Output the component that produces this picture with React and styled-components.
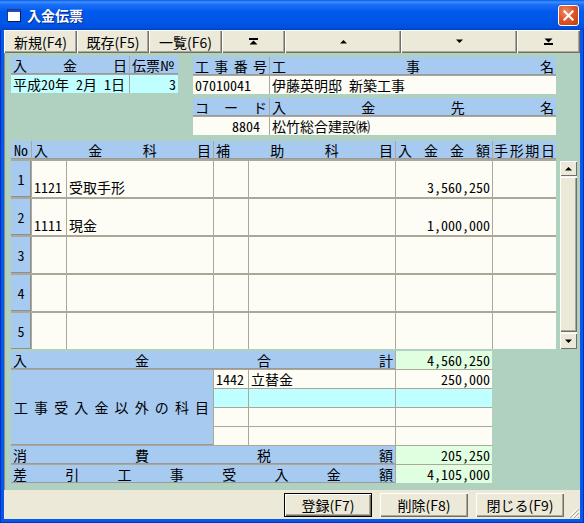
import React from "react";
import styled, { createGlobalStyle } from "styled-components";

const GlobalStyle = createGlobalStyle`
  html, body {
    margin: 0;
    padding: 0;
  }
  body {
    font-family: "Noto Sans CJK JP", "Noto Sans", sans-serif;
    font-size: 14px;
    color: #000;
    font-feature-settings: "hwid" 1;
  }
`;

const Window = styled.div`
  width: 584px;
  height: 523px;
  display: flex;
  flex-direction: column;
  background: #0055e5;
  overflow: hidden;
`;

const TitleBar = styled.div`
  height: 30px;
  flex: none;
  display: flex;
  align-items: center;
  padding: 0 5px 0 7px;
  box-sizing: border-box;
  background: linear-gradient(
    to bottom,
    #0a5ae8 0%,
    #3d90fd 7%,
    #1b6ff5 15%,
    #0059ee 40%,
    #0056e6 75%,
    #0050dc 92%,
    #0040c8 100%
  );
  color: #fff;
`;

const Title = styled.span`
  flex: 1;
  margin-left: 6px;
  font-weight: bold;
  font-size: 14px;
  line-height: 30px;
  text-shadow: 1px 1px 0 #0a2a90;
`;

const CloseButton = styled.div`
  width: 21px;
  height: 21px;
  box-sizing: border-box;
  border: 1px solid #fff;
  border-radius: 3px;
  background: radial-gradient(circle at 35% 30%, #f08a64 0%, #e2562a 45%, #c33a10 100%);
  display: flex;
  align-items: center;
  justify-content: center;
`;

const Frame = styled.div`
  flex: 1;
  display: flex;
  padding: 0 4px 4px;
  background: #0858e8;
  box-shadow: inset 1px 0 0 #0030c8, inset -1px 0 0 #0030c8, inset 0 -1px 0 #0030c8;
`;

const Client = styled.div`
  flex: 1;
  display: flex;
  flex-direction: column;
  background: #ece9d8;
`;

const Toolbar = styled.div`
  display: flex;
  height: 23px;
  flex: none;
`;

const RaisedButton = styled.button`
  width: ${(p) => p.$w}px;
  height: ${(p) => p.$h || 23}px;
  flex: none;
  padding: 0;
  margin: 0;
  border: none;
  background: #ece9d8;
  font-family: inherit;
  font-size: 14px;
  color: #000;
  display: flex;
  align-items: center;
  justify-content: center;
  box-shadow: inset 1px 1px 0 #fff, inset -1px -1px 0 #716f64, inset -2px -2px 0 #aca899;
  ${(p) =>
    p.$default &&
    `
    outline: 1px solid #000;
    outline-offset: -1px;
    box-shadow: inset 2px 2px 0 #fff, inset -2px -2px 0 #716f64, inset -3px -3px 0 #aca899;
  `}
`;

const Body = styled.div`
  flex: 1;
  display: flex;
  flex-direction: column;
  align-items: flex-start;
  background: #b0d0c0;
  border-left: 1px solid #8a8a80;
  padding: 3px 0 0 6px;
`;

const Top = styled.div`
  display: flex;
  align-items: flex-start;
  gap: 15px;
`;

const FormGrid = styled.div`
  display: grid;
  grid-template-columns: ${(p) => p.$cols};
  grid-auto-rows: 18px;
  gap: 1px;
  background: #a8a8a0;
  margin-top: ${(p) => p.$top || 0}px;
`;

const RightStack = styled.div`
  display: flex;
  flex-direction: column;
  gap: 4px;
  margin-top: 1px;
`;

const Head = styled.div`
  background: #a6caf0;
  box-shadow: inset 0 -1px 0 #9a9a9a;
  display: flex;
  align-items: center;
  justify-content: ${(p) => (p.$spread ? "space-between" : p.$center ? "center" : "flex-start")};
  padding: ${(p) => (p.$pad != null ? p.$pad : "0 2px")};
  line-height: 17px;
  white-space: nowrap;
  overflow: hidden;
  grid-column: ${(p) => p.$col || "auto"};
  grid-row: ${(p) => p.$row || "auto"};
`;

const Cell = styled.div`
  background: ${(p) => p.$bg || "#fdfdf6"};
  display: flex;
  align-items: ${(p) => (p.$bottom ? "flex-end" : "center")};
  justify-content: ${(p) => (p.$right ? "flex-end" : "flex-start")};
  padding: ${(p) => (p.$bottom ? "0 2px 1px" : "0 2px")};
  line-height: 17px;
  white-space: pre;
  overflow: hidden;
  grid-column: ${(p) => p.$col || "auto"};
`;

const RowNo = styled.div`
  background: #a6caf0;
  box-shadow: inset -1px -1px 0 #8e8e8e;
  display: flex;
  align-items: center;
  justify-content: center;
  line-height: 17px;
`;

const Middle = styled.div`
  display: flex;
  align-items: flex-start;
  gap: 4px;
  margin-top: 6px;
`;

const MainGrid = styled.div`
  display: grid;
  grid-template-columns: 20px 34px 146px 34px 146px 96px 63px;
  grid-template-rows: 18px repeat(5, 36px);
  column-gap: 1px;
  row-gap: 2px;
  background: #aca899;
`;

const Scrollbar = styled.div`
  width: 17px;
  height: 188px;
  margin-top: 20px;
  display: flex;
  flex-direction: column;
  gap: 1px;
  background: #f4f3ee;
`;

const ScrollButton = styled.div`
  height: ${(p) => p.$h}px;
  flex: none;
  background: #ece9d8;
  box-shadow: inset 1px 1px 0 #fff, inset -1px -1px 0 #716f64;
  display: flex;
  align-items: center;
  justify-content: center;
`;

const ScrollThumb = styled.div`
  flex: 1;
  background: #ece9d8;
  box-shadow: inset 1px 1px 0 #fff, inset -1px -1px 0 #716f64, inset -2px -2px 0 #aca899;
`;

const LowerGrid = styled.div`
  display: grid;
  grid-template-columns: 20px 34px 146px 34px 146px 96px;
  grid-template-rows: repeat(7, 18px);
  gap: 1px;
  background: #aca899;
  margin-top: 2px;
`;

const Footer = styled.div`
  position: relative;
  height: 29px;
  flex: none;
  display: flex;
  justify-content: flex-end;
  gap: 8px;
  padding: 3px 16px 0 0;
  box-sizing: border-box;
`;

const Grip = styled.svg`
  position: absolute;
  right: 1px;
  bottom: 1px;
`;

const Spread = ({ text }) =>
  text.split("").map((c, i) => <span key={i}>{c}</span>);

const TopIcon = ({ flip }) => (
  <svg width="9" height="7" viewBox="0 0 9 7" style={flip ? { transform: "scaleY(-1)" } : null}>
    <rect x="0" y="0" width="9" height="2" fill="#000" />
    <polygon points="0.5,6.5 4.5,2.5 8.5,6.5" fill="#000" />
  </svg>
);

const Arrow = ({ down, size = 7 }) => (
  <svg width={size} height={Math.ceil(size / 2) + 1} viewBox="0 0 7 4">
    <polygon points={down ? "0,0 7,0 3.5,3.5" : "0,4 7,4 3.5,0.5"} fill="#000" />
  </svg>
);

const rows = [
  { no: "1", code: "1121", name: "受取手形", amount: "3,560,250" },
  { no: "2", code: "1111", name: "現金", amount: "1,000,000" },
  { no: "3" },
  { no: "4" },
  { no: "5" },
];

const others = [
  { code: "1442", name: "立替金", amount: "250,000", bg: "#fdfdf6" },
  { bg: "#c0ffff" },
  { bg: "#fdfdf6" },
  { bg: "#fdfdf6" },
];

export default function App() {
  return (
    <Window>
      <GlobalStyle />
      <TitleBar>
        <svg width="14" height="13" viewBox="0 0 14 13">
          <rect x="0.5" y="0.5" width="13" height="12" fill="#fff" stroke="#1a3a8a" />
          <rect x="1" y="1" width="12" height="2" fill="#2a4ab8" />
          <rect x="13" y="2" width="1" height="11" fill="#0a1a50" />
          <rect x="1" y="12" width="13" height="1" fill="#0a1a50" />
        </svg>
        <Title>入金伝票</Title>
        <CloseButton>
          <svg width="11" height="11" viewBox="0 0 11 11">
            <path d="M1.5 1.5 L9.5 9.5 M9.5 1.5 L1.5 9.5" stroke="#fff" strokeWidth="2.2" strokeLinecap="square" />
          </svg>
        </CloseButton>
      </TitleBar>
      <Frame>
        <Client>
          <Toolbar>
            <RaisedButton $w={73}>新規(F4)</RaisedButton>
            <RaisedButton $w={72}>既存(F5)</RaisedButton>
            <RaisedButton $w={73}>一覧(F6)</RaisedButton>
            <RaisedButton $w={63}>
              <TopIcon />
            </RaisedButton>
            <RaisedButton $w={116}>
              <Arrow />
            </RaisedButton>
            <RaisedButton $w={116}>
              <Arrow down />
            </RaisedButton>
            <RaisedButton $w={63}>
              <TopIcon flip />
            </RaisedButton>
          </Toolbar>
          <Body>
            <Top>
              <FormGrid $cols="118px 48px">
                <Head $spread>
                  <Spread text="入金日" />
                </Head>
                <Head>伝票№</Head>
                <Cell $bg="#c0ffff">平成20年 2月 1日</Cell>
                <Cell $bg="#c0ffff" $right>
                  3
                </Cell>
              </FormGrid>
              <RightStack>
                <FormGrid $cols="76px 286px">
                  <Head $spread>
                    <Spread text="工事番号" />
                  </Head>
                  <Head $spread>
                    <Spread text="工事名" />
                  </Head>
                  <Cell>07010041</Cell>
                  <Cell>伊藤英明邸 新築工事</Cell>
                </FormGrid>
                <FormGrid $cols="76px 286px">
                  <Head $spread>
                    <Spread text="コード" />
                  </Head>
                  <Head $spread>
                    <Spread text="入金先名" />
                  </Head>
                  <Cell $right>8804 </Cell>
                  <Cell>松竹総合建設㈱</Cell>
                </FormGrid>
              </RightStack>
            </Top>

            <Middle>
              <MainGrid>
                <Head $center $pad="0">
                  No
                </Head>
                <Head $spread $col="span 2">
                  <Spread text="入金科目" />
                </Head>
                <Head $spread $col="span 2">
                  <Spread text="補助科目" />
                </Head>
                <Head $spread>
                  <Spread text="入金金額" />
                </Head>
                <Head $spread $pad="0 1px">
                  <Spread text="手形期日" />
                </Head>
                {rows.map((r) => (
                  <React.Fragment key={r.no}>
                    <RowNo>{r.no}</RowNo>
                    <Cell $bottom>{r.code || ""}</Cell>
                    <Cell $bottom>{r.name || ""}</Cell>
                    <Cell $bottom />
                    <Cell $bottom />
                    <Cell $bottom $right>
                      {r.amount || ""}
                    </Cell>
                    <Cell $bottom />
                  </React.Fragment>
                ))}
              </MainGrid>
              <Scrollbar>
                <ScrollButton $h={15}>
                  <Arrow />
                </ScrollButton>
                <ScrollThumb />
                <ScrollButton $h={16}>
                  <Arrow down />
                </ScrollButton>
              </Scrollbar>
            </Middle>

            <LowerGrid>
              <Head $spread $col="span 5">
                <Spread text="入金合計" />
              </Head>
              <Cell $bg="#e0ffe0" $right>
                4,560,250
              </Cell>
              <Head $spread $col="1 / span 3" $row="2 / span 4" $pad="0 4px 0 3px">
                <Spread text="工事受入金以外の科目" />
              </Head>
              {others.map((o, i) => (
                <React.Fragment key={i}>
                  <Cell $bg={o.bg}>{o.code || ""}</Cell>
                  <Cell $bg={o.bg}>{o.name || ""}</Cell>
                  <Cell $bg={o.bg} $right>
                    {o.amount || ""}
                  </Cell>
                </React.Fragment>
              ))}
              <Head $spread $col="1 / span 5">
                <Spread text="消費税額" />
              </Head>
              <Cell $bg="#e0ffe0" $right>
                205,250
              </Cell>
              <Head $spread $col="1 / span 5">
                <Spread text="差引工事受入金額" />
              </Head>
              <Cell $bg="#e0ffe0" $right>
                4,105,000
              </Cell>
            </LowerGrid>
          </Body>
          <Footer>
            <RaisedButton $w={88} $h={24} $default>
              登録(F7)
            </RaisedButton>
            <RaisedButton $w={88} $h={24}>
              削除(F8)
            </RaisedButton>
            <RaisedButton $w={88} $h={24}>
              閉じる(F9)
            </RaisedButton>
            <Grip width="12" height="12" viewBox="0 0 12 12">
              <path d="M11 2 L2 11 M11 6 L6 11 M11 10 L10 11" stroke="#fff" strokeWidth="1" />
              <path d="M12 3 L3 12 M12 7 L7 12 M12 11 L11 12" stroke="#aca899" strokeWidth="1" />
            </Grip>
          </Footer>
        </Client>
      </Frame>
    </Window>
  );
}
